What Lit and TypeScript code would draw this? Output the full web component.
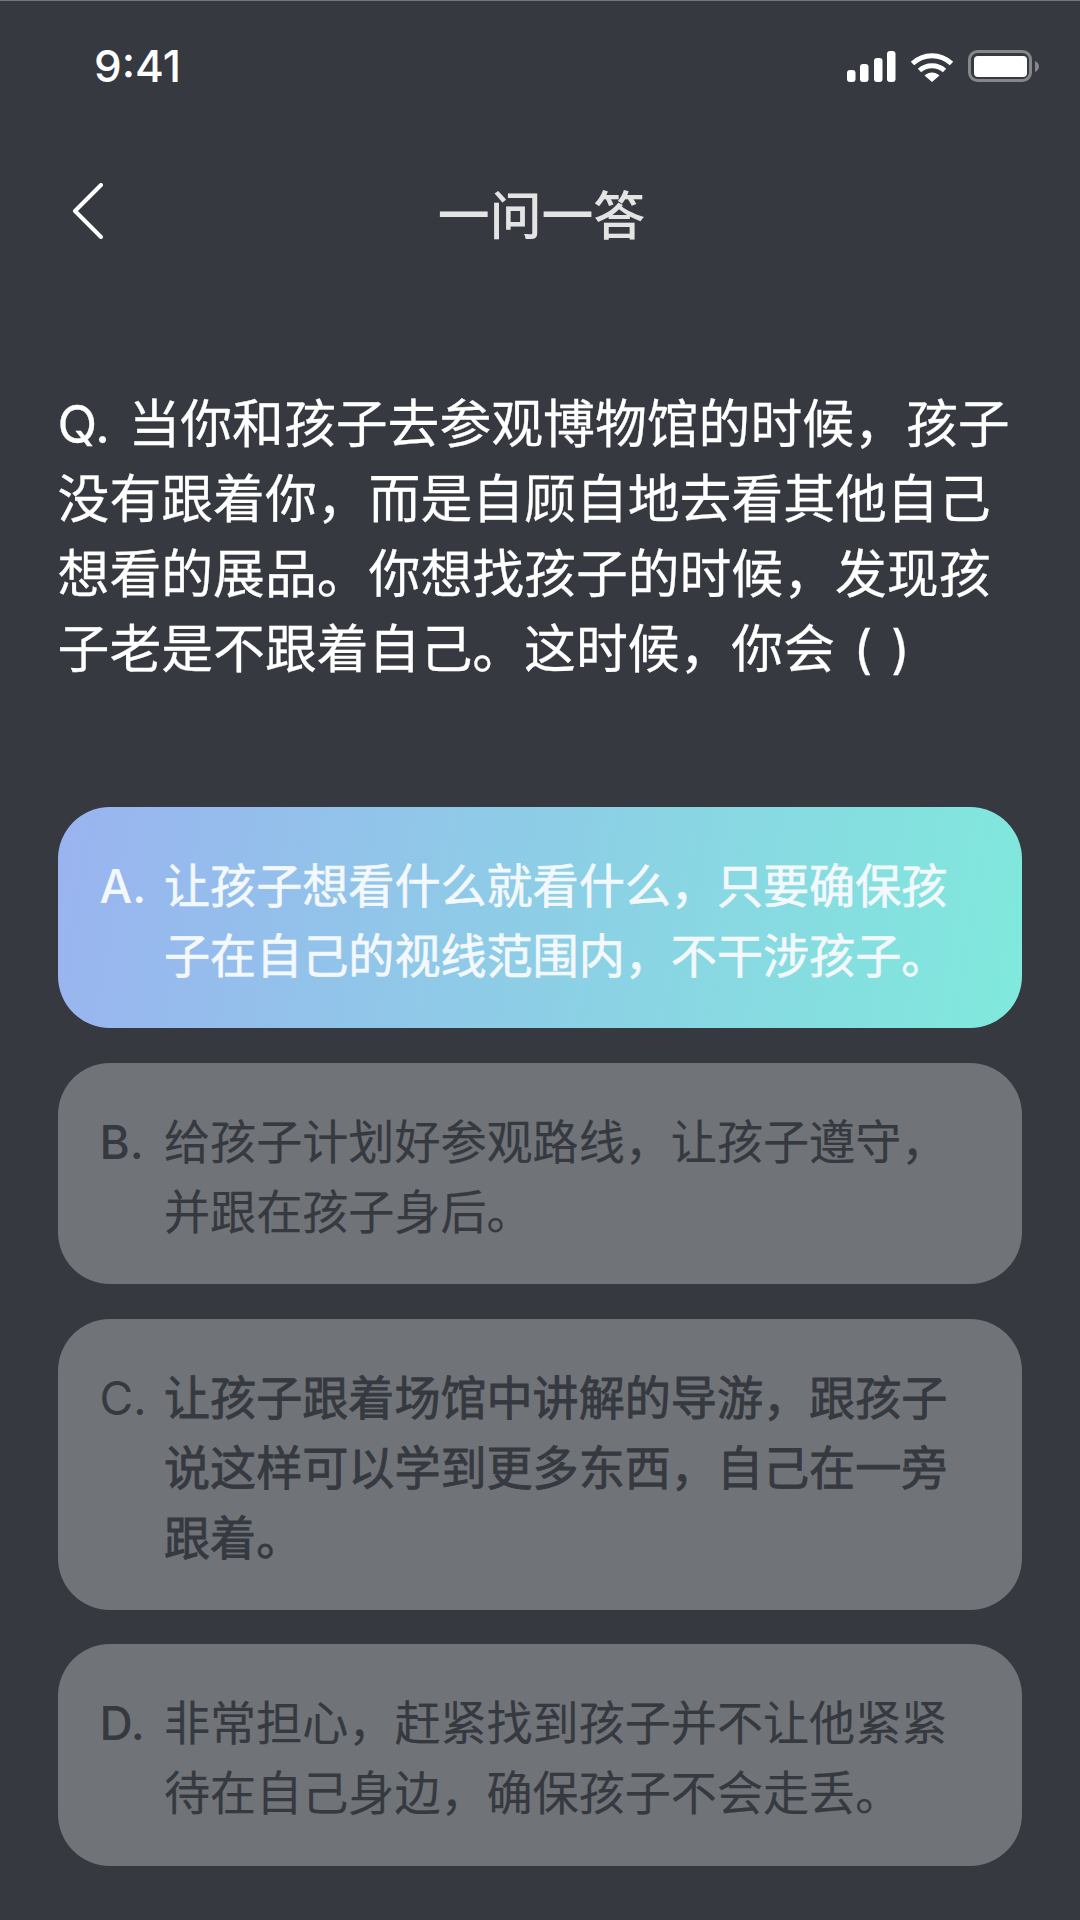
import { LitElement, html, css } from "lit";
import { customElement } from "lit/decorators.js";

interface Opt { key: string; text: string; state: string; }

const OPTIONS: Opt[] = [
  { key: "A.", text: "让孩子想看什么就看什么，只要确保孩子在自己的视线范围内，不干涉孩子。", state: "active" },
  { key: "B.", text: "给孩子计划好参观路线，让孩子遵守，并跟在孩子身后。", state: "" },
  { key: "C.", text: "让孩子跟着场馆中讲解的导游，跟孩子说这样可以学到更多东西，自己在一旁跟着。", state: "strong" },
  { key: "D.", text: "非常担心，赶紧找到孩子并不让他紧紧待在自己身边，确保孩子不会走丢。", state: "" },
];

@customElement("app-root")
export class AppRoot extends LitElement {
  static styles = css`
    :host {
      display: block;
      width: 1080px;
      height: 1920px;
      box-sizing: border-box;
      background: #363940;
      border-top: 1px solid #74767b;
      overflow: hidden;
      font-family: Inter, "Noto Sans CJK SC", sans-serif;
      color: #fff;
    }
    .status {
      display: flex;
      justify-content: space-between;
      align-items: center;
      height: 32px;
      padding: 49px 41px 0 94px;
    }
    .time {
      font-size: 44px;
      font-weight: 500;
      line-height: 32px;
    }
    .icons { display: flex; align-items: center; gap: 14px; }
    .icons svg { display: block; }
    .nav {
      position: relative;
      display: flex;
      align-items: center;
      justify-content: center;
      height: 56px;
      margin-top: 101px;
    }
    .back { position: absolute; left: 72px; top: 0; display: block; }
    .title {
      font-size: 51.84px;
      font-weight: 500;
      color: #e4e4e4;
      line-height: 56px;
      padding: 12px 0 0 3px;
    }
    .question {
      margin: 149px 57.6px 0;
      font-size: 51.84px;
      line-height: 74.88px;
      color: #fff;
      word-spacing: 4px;
      -webkit-text-stroke: 0.3px currentColor;
    }
    .options {
      display: flex;
      flex-direction: column;
      gap: 34.56px;
      margin: 119.4px 57.6px 0;
    }
    .opt {
      display: flex;
      padding: 44px 42px 37.3px;
      border-radius: 51.84px;
      background: #707478;
      color: #363940;
      font-size: 46.08px;
      line-height: 70px;
    }
    .text { flex: 1; min-width: 0; -webkit-text-stroke: 0.2px currentColor; }
    .opt.active {
      background: linear-gradient(100deg, #9ab3f0 0%, #80e9dc 100%);
      color: #f3f8fc;
    }
    .opt.active .text { -webkit-text-stroke: 0.7px currentColor; }
    .opt.strong .text { -webkit-text-stroke: 0.9px currentColor; }
    .key { flex: 0 0 64.4px; font-weight: 500; }
    .opt.strong .key { font-weight: 400; }
  `;

  render() {
    return html`
      <div class="status">
        <div class="time">9:41</div>
        <div class="icons">
          <svg width="49" height="31" viewBox="0 0 49 31" fill="#fff">
            <rect x="0" y="19" width="8.5" height="12" rx="3"></rect>
            <rect x="13" y="13" width="8.5" height="18" rx="3"></rect>
            <rect x="27" y="7" width="8.5" height="24" rx="3"></rect>
            <rect x="40" y="0" width="8.5" height="31" rx="3"></rect>
          </svg>
          <svg width="44" height="32" viewBox="0 0 44 32" fill="none">
            <path d="M2.5 13.5C13.5 3 30.5 3 41.5 13.5" stroke="#fff" stroke-width="5"></path>
            <path d="M9.5 20.5C16.5 14 27.5 14 34.5 20.5" stroke="#fff" stroke-width="5"></path>
            <path d="M14.5 25.5C19 21.5 25 21.5 29.5 25.5L22 32Z" fill="#fff"></path>
          </svg>
          <svg width="71" height="32" viewBox="0 0 71 32" fill="none">
            <rect x="1.5" y="1.5" width="61" height="29" rx="8" stroke="#85878b" stroke-width="3"></rect>
            <rect x="6" y="6" width="53" height="21" rx="4" fill="#fff"></rect>
            <path d="M67 11C69.5 12 71 14 71 16.5C71 19 69.5 21 67 22Z" fill="#85878b"></path>
          </svg>
        </div>
      </div>
      <div class="nav">
        <svg class="back" width="32" height="56" viewBox="0 0 32 56" fill="none">
          <path d="M29 2L3 28L29 54" stroke="#fff" stroke-width="4" stroke-linecap="round" stroke-linejoin="round"></path>
        </svg>
        <div class="title">一问一答</div>
      </div>
      <div class="question">Q. 当你和孩子去参观博物馆的时候，孩子没有跟着你，而是自顾自地去看其他自己想看的展品。你想找孩子的时候，发现孩子老是不跟着自己。这时候，你会 ( )</div>
      <div class="options">
        ${OPTIONS.map(
          (o) => html`
            <div class="opt ${o.state}">
              <div class="key">${o.key}</div>
              <div class="text">${o.text}</div>
            </div>
          `
        )}
      </div>
    `;
  }
}
